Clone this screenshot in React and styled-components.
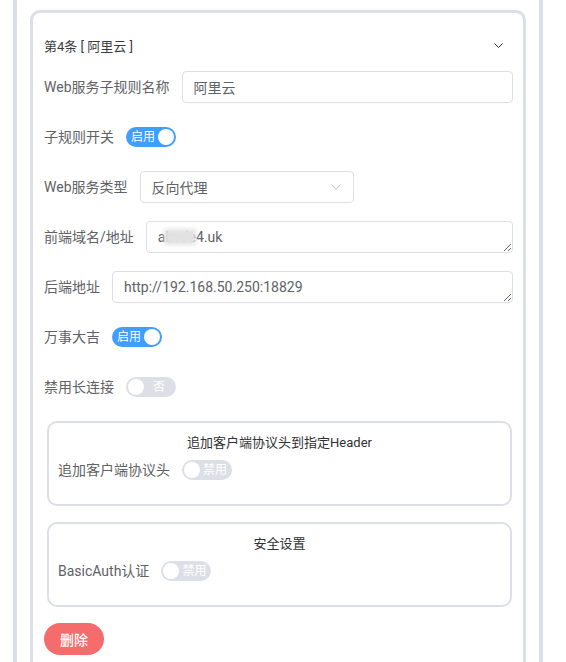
import React from "react";
import styled, { createGlobalStyle } from "styled-components";

const GlobalStyle = createGlobalStyle`
  html, body {
    margin: 0;
    padding: 0;
    background: #fff;
    overflow: hidden;
  }
  body {
    font-family: Roboto, "Noto Sans CJK SC", sans-serif;
  }
`;

const Frame = styled.div`
  margin-left: 13px;
  width: 530px;
  min-height: 662px;
  box-sizing: border-box;
  border-left: 4px solid #dcdfe6;
  border-right: 4px solid #dcdfe6;
  padding: 10px 13px 0;
`;

const Card = styled.div`
  border: 3px solid #dcdfe6;
  border-radius: 10px;
  padding: 8px 10px 40px 11px;
`;

const Header = styled.div`
  display: flex;
  align-items: center;
  height: 48px;
  font-size: 13px;
  color: #3a3b3e;

  svg {
    margin-left: auto;
    margin-right: 10px;
  }
`;

const Body = styled.div`
  padding-top: 2px;
`;

const Item = styled.div`
  display: flex;
  align-items: center;
  min-height: 32px;
  margin-bottom: 18px;
`;

const Label = styled.label`
  flex-shrink: 0;
  padding-right: 12px;
  font-size: 14px;
  line-height: 32px;
  color: #606266;
`;

const Input = styled.input`
  flex: 1;
  height: 32px;
  box-sizing: border-box;
  border: 1px solid #dcdfe6;
  border-radius: 4px;
  padding: 0 11px;
  font: inherit;
  font-size: 14px;
  color: #606266;
  outline: none;
`;

const Select = styled.div`
  display: flex;
  align-items: center;
  justify-content: space-between;
  width: 214px;
  height: 32px;
  box-sizing: border-box;
  border: 1px solid #dcdfe6;
  border-radius: 4px;
  padding: 0 12px 0 11px;
  font-size: 14px;
  color: #606266;
`;

const AreaWrap = styled.div`
  position: relative;
  flex: 1;
  display: flex;
`;

const TextArea = styled.textarea`
  flex: 1;
  height: 32px;
  box-sizing: border-box;
  border: 1px solid #dcdfe6;
  border-radius: 4px;
  padding: 5px 11px;
  font: inherit;
  font-size: 14px;
  line-height: 20px;
  color: #606266;
  resize: vertical;
  outline: none;
`;

const Mask = styled.div`
  position: absolute;
  left: 18px;
  top: 8px;
  width: 32px;
  height: 16px;
  background: #e2e2e2;
  filter: blur(2px);
`;

const Switch = styled.span`
  display: inline-flex;
  align-items: center;
  flex-direction: ${(p) => (p.$on ? "row" : "row-reverse")};
  width: 50px;
  height: 20px;
  border-radius: 10px;
  background: ${(p) => (p.$on ? "#409eff" : "#dcdfe6")};
`;

const Knob = styled.span`
  width: 16px;
  height: 16px;
  margin: 0 2px;
  border-radius: 50%;
  background: #fff;
`;

const SwitchText = styled.span`
  flex: 1;
  text-align: center;
  font-size: 12px;
  line-height: 20px;
  color: #fff;
  padding: ${(p) => (p.$on ? "0 1px 0 5px" : "0 5px 0 1px")};
`;

const Group = styled.div`
  border: 2px solid #dcdfe6;
  border-radius: 10px;
  margin: 1px 1px 16px 3px;
  padding: 10px 9px 0;
`;

const GroupTitle = styled.div`
  text-align: center;
  font-size: 13px;
  line-height: 20px;
  color: #303133;
  margin-bottom: 1px;
`;

const DeleteButton = styled.button`
  height: 32px;
  padding: 0 16px;
  border: none;
  border-radius: 20px;
  background: #f56c6c;
  color: #fff;
  font: inherit;
  font-size: 14px;
  font-weight: 500;
`;

const Chevron = ({ color = "#303133", w = 9, h = 5 }) => (
  <svg width={w} height={h} viewBox={`0 0 ${w} ${h}`}>
    <polyline
      points={`0.5,0.5 ${w / 2},${h - 0.5} ${w - 0.5},0.5`}
      fill="none"
      stroke={color}
      strokeWidth="1"
    />
  </svg>
);

const Toggle = ({ on, text }) => (
  <Switch $on={on}>
    <SwitchText $on={on}>{text}</SwitchText>
    <Knob />
  </Switch>
);

export default function App() {
  return (
    <>
      <GlobalStyle />
      <Frame>
        <Card>
          <Header>
            第4条 [ 阿里云 ]
            <Chevron />
          </Header>
          <Body>
            <Item>
              <Label>Web服务子规则名称</Label>
              <Input defaultValue="阿里云" />
            </Item>
            <Item>
              <Label>子规则开关</Label>
              <Toggle on text="启用" />
            </Item>
            <Item>
              <Label>Web服务类型</Label>
              <Select>
                反向代理
                <Chevron color="#c0c4cc" w={10} h={6} />
              </Select>
            </Item>
            <Item>
              <Label>前端域名/地址</Label>
              <AreaWrap>
                <TextArea rows={1} defaultValue="abcde4.uk" />
                <Mask />
              </AreaWrap>
            </Item>
            <Item>
              <Label>后端地址</Label>
              <AreaWrap>
                <TextArea rows={1} defaultValue="http://192.168.50.250:18829" />
              </AreaWrap>
            </Item>
            <Item>
              <Label>万事大吉</Label>
              <Toggle on text="启用" />
            </Item>
            <Item>
              <Label>禁用长连接</Label>
              <Toggle text="否" />
            </Item>

            <Group>
              <GroupTitle>追加客户端协议头到指定Header</GroupTitle>
              <Item>
                <Label>追加客户端协议头</Label>
                <Toggle text="禁用" />
              </Item>
            </Group>

            <Group>
              <GroupTitle>安全设置</GroupTitle>
              <Item>
                <Label>BasicAuth认证</Label>
                <Toggle text="禁用" />
              </Item>
            </Group>

            <DeleteButton>删除</DeleteButton>
          </Body>
        </Card>
      </Frame>
    </>
  );
}
